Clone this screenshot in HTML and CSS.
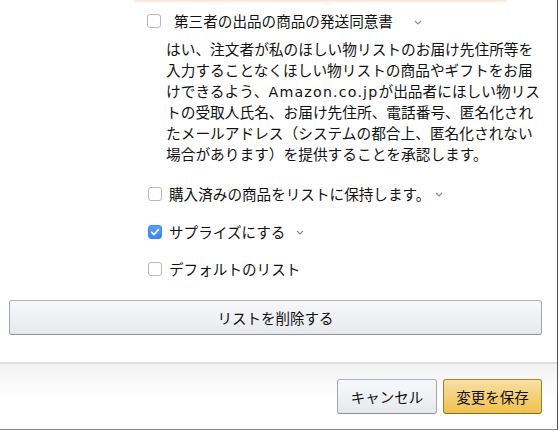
FILE: index.html
```html
<!DOCTYPE html>
<html lang="ja">
<head>
<meta charset="utf-8">
<link rel="stylesheet" href="styles.css">
</head>
<body>
<div class="window">
  <div class="content">
    <div class="glow"></div>
    <div class="row row-first">
      <span class="box"></span>
      <span class="label label-first">第三者の出品の商品の発送同意書</span>
      <svg class="chev chev-first" width="8" height="5" viewBox="0 0 8 5"><polyline points="1,1 4,4 7,1" fill="none" stroke="#8a8a8a" stroke-width="1.2"/></svg>
    </div>
    <p class="desc">はい、注文者が私のほしい物リストのお届け先住所等を<br>入力することなくほしい物リストの商品やギフトをお届<br>けできるよう、<span class="latin">Amazon.co.jp</span>が出品者にほしい物リス<br>トの受取人氏名、お届け先住所、電話番号、匿名化され<br>たメールアドレス（システムの都合上、匿名化されない<br>場合があります）を提供することを承認します。</p>
    <div class="row row-keep">
      <span class="box"></span>
      <span class="label">購入済みの商品をリストに保持します。</span>
      <svg class="chev chev-keep" width="8" height="5" viewBox="0 0 8 5"><polyline points="1,1 4,4 7,1" fill="none" stroke="#8a8a8a" stroke-width="1.2"/></svg>
    </div>
    <div class="row row-surprise">
      <span class="box box-checked"><svg width="14" height="14" viewBox="0 0 14 14"><polyline points="3.6,7.2 6,9.6 10.4,4.6" fill="none" stroke="#fff" stroke-width="1.6" stroke-linecap="round" stroke-linejoin="round"/></svg></span>
      <span class="label">サプライズにする</span>
      <svg class="chev chev-surprise" width="8" height="5" viewBox="0 0 8 5"><polyline points="1,1 4,4 7,1" fill="none" stroke="#8a8a8a" stroke-width="1.2"/></svg>
    </div>
    <div class="row row-default">
      <span class="box"></span>
      <span class="label">デフォルトのリスト</span>
    </div>
    <button class="btn btn-delete">リストを削除する</button>
  </div>
  <div class="footer">
    <button class="btn btn-cancel">キャンセル</button>
    <button class="btn btn-save">変更を保存</button>
  </div>
</div>
</body>
</html>
```
FILE: styles.css
```css
html, body {
  margin: 0;
  padding: 0;
  background: #ffffff;
}
body {
  width: 560px;
  height: 431px;
  overflow: hidden;
  font-family: "Noto Sans CJK JP", "Noto Sans", sans-serif;
  color: #111111;
}
.window {
  width: 557px;
  height: 429px;
  border-right: 1px solid #555555;
  border-bottom: 1px solid #8a8a8a;
  display: flex;
  flex-direction: column;
}
.content {
  height: 362px;
  display: flex;
  flex-direction: column;
}
.glow {
  height: 3px;
  margin-left: 134px;
  width: 373px;
  background: linear-gradient(#fbe4d3, #fffaf6);
}
.row {
  height: 20px;
  display: flex;
  align-items: center;
  padding-left: 148px;
  font-size: 14.6px;
  line-height: 20px;
}
.row-first {
  margin-top: 8px;
  padding-left: 147px;
}
.row-keep { margin-top: 19px; }
.row-surprise { margin-top: 18px; }
.row-default { margin-top: 17px; }
.box {
  width: 12px;
  height: 12px;
  border: 1px solid #b9b9b9;
  border-radius: 3px;
  background: #ffffff;
  flex: none;
  display: flex;
}
.box-checked {
  border-color: #3f86ee;
  background: linear-gradient(#5aa0fa, #3a87f3);
}
.box-checked svg {
  margin: -1px;
}
.label {
  margin-left: 7px;
  white-space: nowrap;
}
.label-first {
  margin-left: 13px;
}
.chev {
  flex: none;
  margin-top: 2px;
}
.chev-first { margin-left: 21px; }
.chev-keep { margin-left: 5px; }
.chev-surprise { margin-left: 11px; }
.desc {
  margin: 8px 0 0 166px;
  width: 380px;
  font-size: 14.7px;
  line-height: 20.8px;
  white-space: nowrap;
}
.latin {
  font-family: "DejaVu Sans", "Noto Sans", sans-serif;
  font-size: 14.2px;
  letter-spacing: 1.2px;
}
.btn {
  font-family: "Noto Sans CJK JP", "Noto Sans", sans-serif;
  font-size: 14.5px;
  color: #111111;
  border: 1px solid #adb1b8;
  border-color: #adb1b8 #a2a6ac #8d9096;
  border-radius: 3px;
  background: linear-gradient(#f7f8fa, #e7e9ec);
  padding: 0;
  display: flex;
  align-items: center;
  justify-content: center;
}
.btn-delete {
  margin: 21px 0 0 9px;
  width: 533px;
  height: 35px;
}
.footer {
  flex: 1;
  border-top: 2px solid #dedede;
  background: linear-gradient(#f2f2f2, #ffffff 36px);
  display: flex;
  justify-content: flex-end;
  align-items: flex-start;
  gap: 6px;
  padding: 15px 15px 0 0;
}
.btn-cancel {
  width: 100px;
  height: 35px;
}
.btn-save {
  width: 99px;
  height: 35px;
  background: linear-gradient(#f7dfa5, #f0c14b);
  border-color: #a88734 #9c7e31 #846a29;
}
```
